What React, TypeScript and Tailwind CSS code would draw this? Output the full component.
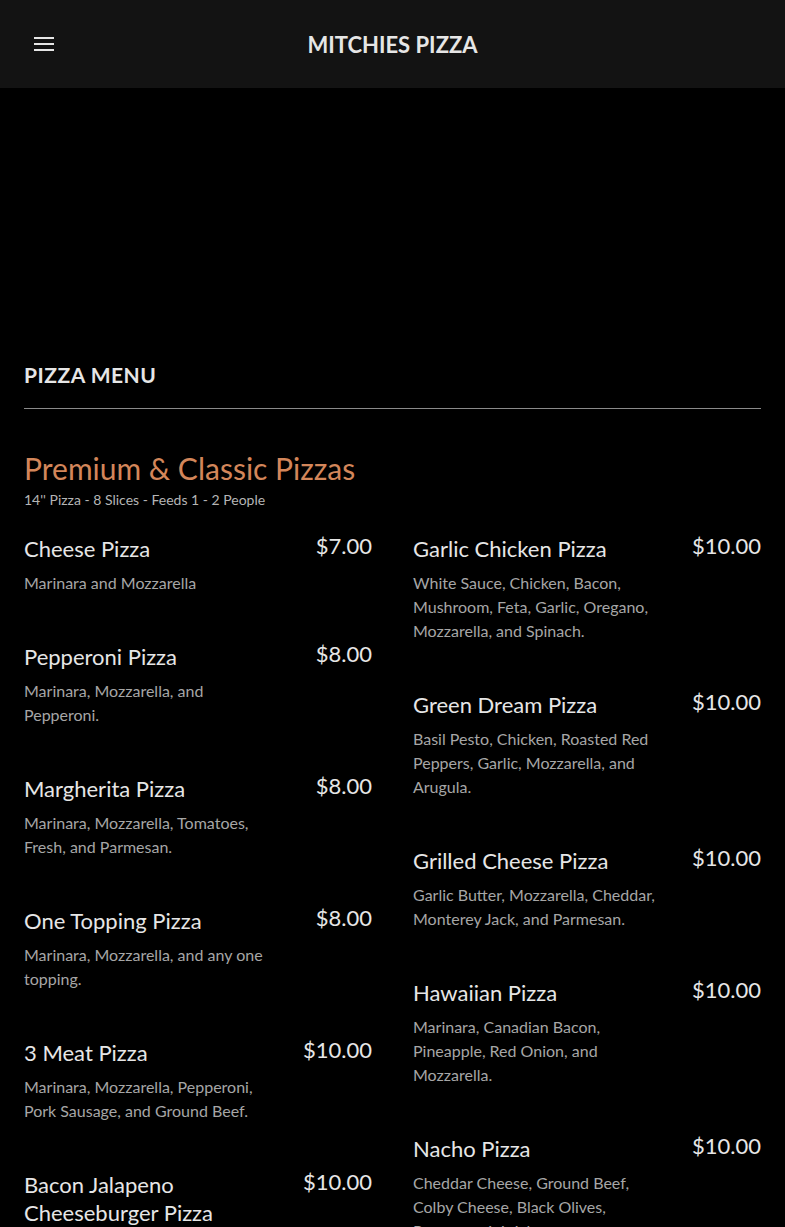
import React from "react";

type Item = { name: string; price: string; desc: string };

const leftItems: Item[] = [
  { name: "Cheese Pizza", price: "$7.00", desc: "Marinara and Mozzarella" },
  { name: "Pepperoni Pizza", price: "$8.00", desc: "Marinara, Mozzarella, and Pepperoni." },
  { name: "Margherita Pizza", price: "$8.00", desc: "Marinara, Mozzarella, Tomatoes, Fresh, and Parmesan." },
  { name: "One Topping Pizza", price: "$8.00", desc: "Marinara, Mozzarella, and any one topping." },
  { name: "3 Meat Pizza", price: "$10.00", desc: "Marinara, Mozzarella, Pepperoni, Pork Sausage, and Ground Beef." },
  { name: "Bacon Jalapeno Cheeseburger Pizza", price: "$10.00", desc: "Marinara, Mozzarella, Ground Beef, Bacon, Jalapenos, and Cheddar." },
];

const rightItems: Item[] = [
  { name: "Garlic Chicken Pizza", price: "$10.00", desc: "White Sauce, Chicken, Bacon, Mushroom, Feta, Garlic, Oregano, Mozzarella, and Spinach." },
  { name: "Green Dream Pizza", price: "$10.00", desc: "Basil Pesto, Chicken, Roasted Red Peppers, Garlic, Mozzarella, and Arugula." },
  { name: "Grilled Cheese Pizza", price: "$10.00", desc: "Garlic Butter, Mozzarella, Cheddar, Monterey Jack, and Parmesan." },
  { name: "Hawaiian Pizza", price: "$10.00", desc: "Marinara, Canadian Bacon, Pineapple, Red Onion, and Mozzarella." },
  { name: "Nacho Pizza", price: "$10.00", desc: "Cheddar Cheese, Ground Beef, Colby Cheese, Black Olives, Pepperoncini, Jalapenos, Tomatoes." },
];

const MenuItem: React.FC<{ item: Item }> = ({ item }) => (
  <div className="flex items-start justify-between">
    <div className="w-[70%]">
      <h4 className="text-[22px] leading-[28px] text-[#e6e6e6]">{item.name}</h4>
      <p className="mt-2 text-[16px] leading-[24px] text-[#a6a6a6]">{item.desc}</p>
    </div>
    <span className="text-[22px] leading-[22px] text-[#e6e6e6]">{item.price}</span>
  </div>
);

const App: React.FC = () => {
  return (
    <div className="min-h-screen bg-black font-['Lato',sans-serif]">
      {/* Header */}
      <header className="grid h-[88px] grid-cols-[1fr_auto_1fr] items-center bg-[#131313]">
        <div className="pl-[34px]">
          <svg width="20" height="16" viewBox="0 0 20 16" className="text-[#e6e6e6]">
            <rect x="0" y="1" width="20" height="2" fill="currentColor" />
            <rect x="0" y="7" width="20" height="2" fill="currentColor" />
            <rect x="0" y="13" width="20" height="2" fill="currentColor" />
          </svg>
        </div>
        <h1 className="text-[22px] font-bold text-[#e6e6e6]">MITCHIES PIZZA</h1>
        <div />
      </header>

      {/* Hero */}
      <div className="h-[239px] bg-black" />

      {/* Menu */}
      <section className="px-6 pt-8 pb-16">
        <h2 className="text-[21px] leading-[32px] font-bold tracking-[0.5px] text-[#e6e6e6]">PIZZA MENU</h2>
        <hr className="mt-[17px] border-t border-[#8a8a8a]" />

        <h3 className="mt-[41px] text-[30px] leading-[36px] text-[#d3865a]">Premium &amp; Classic Pizzas</h3>
        <p className="mt-1 text-[14px] leading-[20px] text-[#b5b5b5]">14'' Pizza - 8 Slices - Feeds 1 - 2 People</p>

        <div className="mt-[25px] grid grid-cols-2 gap-x-[41px]">
          <div className="flex flex-col gap-12">
            {leftItems.map((item) => (
              <MenuItem key={item.name} item={item} />
            ))}
          </div>
          <div className="flex flex-col gap-12">
            {rightItems.map((item) => (
              <MenuItem key={item.name} item={item} />
            ))}
          </div>
        </div>
      </section>
    </div>
  );
};

export default App;
